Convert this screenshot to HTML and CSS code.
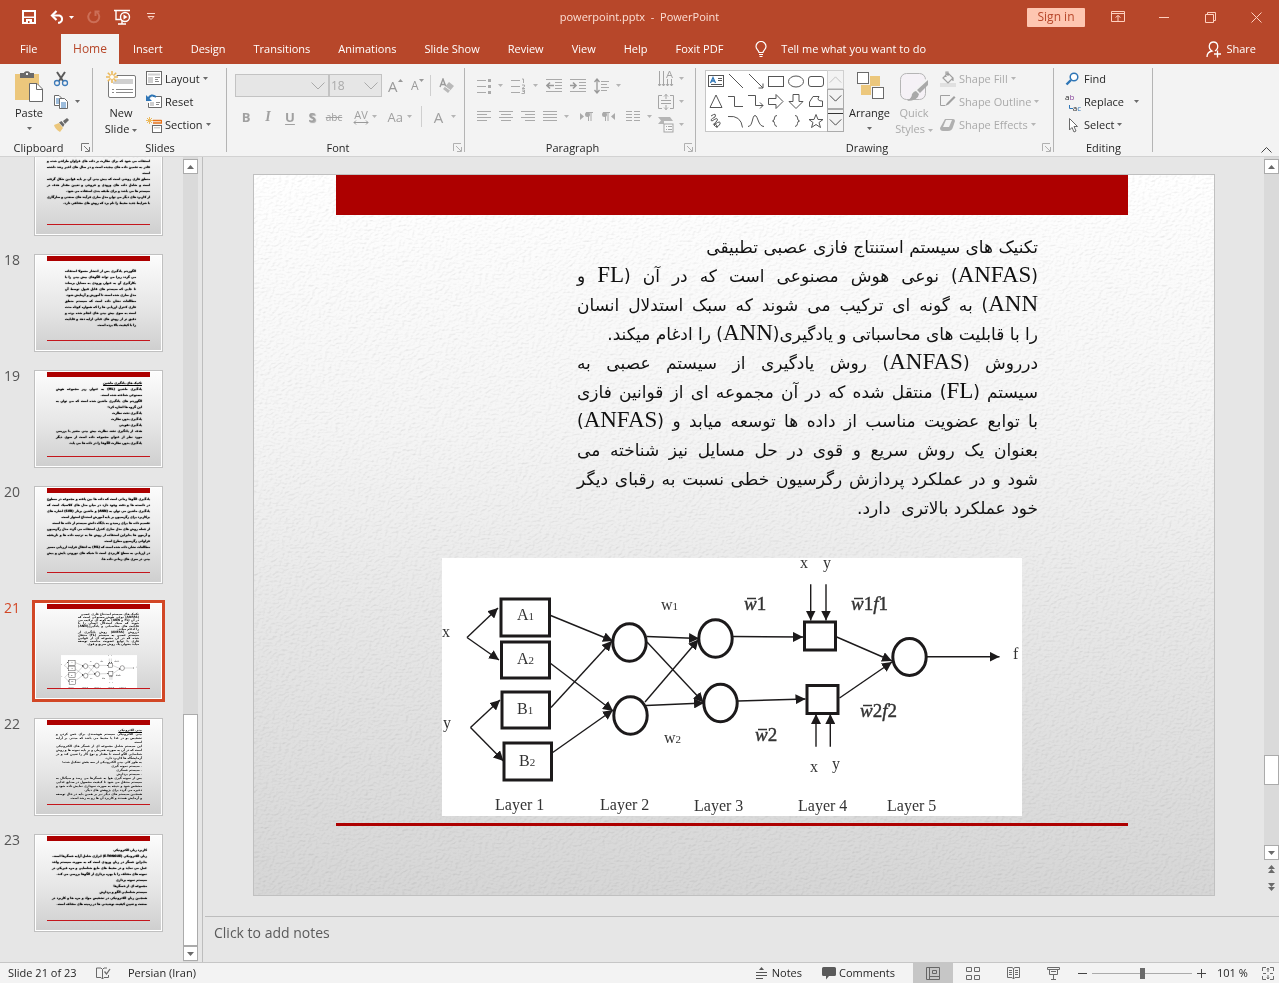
FILE: index.html
```html
<!DOCTYPE html>
<html lang="en">
<head>
<meta charset="utf-8">
<title>powerpoint.pptx - PowerPoint</title>
<link rel="stylesheet" href="styles.css">
</head>
<body>
<svg class="defs" aria-hidden="true">
  <defs>
    <marker id="head" viewBox="0 0 10 10" refX="10" refY="5" markerWidth="10" markerHeight="10" markerUnits="userSpaceOnUse" orient="auto"><path d="M0 0L10 5L0 10Z" fill="#1c1a1b"/></marker>
    <symbol id="anfis" viewBox="442 558 580 258">
      <rect x="442" y="558" width="580" height="258" fill="#fff"/>
      <g fill="none" stroke="#1c1a1b" stroke-width="3">
        <rect x="501" y="599" width="48.500" height="37"/><rect x="501.500" y="642" width="48" height="36"/>
        <rect x="502" y="692" width="47.500" height="36"/><rect x="504" y="743" width="47.500" height="37"/>
        <rect x="804.500" y="622" width="31" height="28"/><rect x="807" y="685.500" width="31" height="28"/>
        <ellipse cx="629.500" cy="642.500" rx="16.700" ry="18.700"/><ellipse cx="630.500" cy="715.500" rx="16.700" ry="18.700"/>
        <ellipse cx="715.500" cy="638.500" rx="16.700" ry="18.700"/><ellipse cx="720.500" cy="703" rx="16.700" ry="18.700"/>
        <ellipse cx="909.500" cy="657" rx="16.700" ry="18.500"/>
      </g>
      <g fill="none" stroke="#1c1a1b" stroke-width="1.400">
        <path d="M467 637.500L498 608" marker-end="url(#head)"/><path d="M467 637.500L499 660" marker-end="url(#head)"/>
        <path d="M470.500 727.500L500 700" marker-end="url(#head)"/><path d="M470.500 727.500L503.500 761" marker-end="url(#head)"/>
        <path d="M550.700 615.500L613 641" marker-end="url(#head)"/><path d="M550.700 663.500L613 711" marker-end="url(#head)"/>
        <path d="M551 707.500L612 641" marker-end="url(#head)"/><path d="M552.700 752.500L613 710" marker-end="url(#head)"/>
        <path d="M647 636.500L699 638.500" marker-end="url(#head)"/><path d="M647 642L703.500 702.500" marker-end="url(#head)"/>
        <path d="M645 702L698.500 639.500" marker-end="url(#head)"/><path d="M646 705.500L704 703" marker-end="url(#head)"/>
        <path d="M733 636.500L803 637" marker-end="url(#head)"/><path d="M738 701L805.500 699" marker-end="url(#head)"/>
        <path d="M836.700 637L892 661" marker-end="url(#head)"/><path d="M839.500 698L892 662" marker-end="url(#head)"/>
        <path d="M927 656.700H999.500" marker-end="url(#head)"/>
        <path d="M810.700 584.300V620.500" marker-end="url(#head)"/><path d="M826 584.300V620.500" marker-end="url(#head)"/>
        <path d="M816 746.700V714" marker-end="url(#head)"/><path d="M830.300 746.700V714" marker-end="url(#head)"/>
      </g>
      <g class="dg">
        <text x="442" y="637">x</text><text x="443" y="728">y</text>
        <text x="517" y="620">A<tspan class="sub">1</tspan></text><text x="517" y="664">A<tspan class="sub">2</tspan></text>
        <text x="517" y="714">B<tspan class="sub">1</tspan></text><text x="519" y="766">B<tspan class="sub">2</tspan></text>
        <text x="661" y="610">w<tspan class="sub">1</tspan></text><text x="664" y="743">w<tspan class="sub">2</tspan></text>
        <text x="800" y="568">x</text><text x="823" y="568">y</text><text x="810" y="772">x</text><text x="832" y="769">y</text>
        <text x="1013" y="659">f</text>
        <text x="495" y="810">Layer 1</text><text x="600" y="810">Layer 2</text><text x="694" y="811">Layer 3</text><text x="798" y="811">Layer 4</text><text x="887" y="811">Layer 5</text>
      </g>
      <g class="wbar">
        <text x="744" y="610"><tspan class="it">w</tspan>1</text><text x="755" y="741"><tspan class="it">w</tspan>2</text>
        <text x="851" y="610"><tspan class="it">w</tspan>1<tspan class="it">f</tspan>1</text><text x="860" y="717"><tspan class="it">w</tspan>2<tspan class="it">f</tspan>2</text>
        <path d="M747 598.500h9M758 729.500h9M854 598.500h9M863 705.500h9" stroke="#333" stroke-width="1.300"/>
      </g>
    </symbol>
    <symbol id="car" viewBox="0 0 5 3"><path d="M0 0H5L2.500 3Z" fill="currentColor"/></symbol>
    <symbol id="launch" viewBox="0 0 9 9"><path d="M.5 8V.5H8M3 3L8 8M8.500 4V8.500H4" fill="none" stroke="currentColor"/></symbol>
    <symbol id="chev" viewBox="0 0 14 8"><path d="M.5 .5L7 7L13.500 .5" fill="none" stroke="currentColor"/></symbol>
  </defs>
</svg>

<div class="app">
<header class="top">
  <div class="titlebar">
    <div class="qat">
      <button aria-label="Save"><svg width="16" height="16" viewBox="0 0 16 16"><path d="M2 2H14V14H2Z" fill="none" stroke="#fff" stroke-width="2"/><path d="M2 7.500H14V9H2ZM5 10H11V15H5Z" fill="#fff"/><path d="M7 12h1.500v2H7Z" fill="#b7472a"/></svg></button>
      <button aria-label="Undo" class="undo"><svg width="16" height="14" viewBox="0 0 16 14"><path d="M2 5.500H9.500a3.800 3.800 0 0 1 0 7.200H8" fill="none" stroke="#fff" stroke-width="2"/><path d="M6.500 1L2 5.500L6.500 10" fill="none" stroke="#fff" stroke-width="2.200"/></svg><svg class="car"><use href="#car"/></svg></button>
      <button aria-label="Redo"><svg width="14" height="14" viewBox="0 0 14 14"><path d="M4 2A5.500 5.500 0 1 0 9.500 2" fill="none" stroke="#cc6f57" stroke-width="2"/><path d="M12.500 1.500H8.500V6" fill="none" stroke="#cc6f57" stroke-width="2"/></svg></button>
      <button aria-label="Start from beginning"><svg width="17" height="16" viewBox="0 0 17 16"><path d="M0 1.500H16M2 2V10.500H8M8 11v4M4 15H12" fill="none" stroke="#fff" stroke-width="1.400"/><circle cx="11" cy="8" r="4.500" fill="#b7472a" stroke="#fff" stroke-width="1.400"/><path d="M9.500 5.500L13.500 8L9.500 10.500Z" fill="#fff"/></svg></button>
      <button aria-label="Customize" class="cust"><svg width="9" height="8" viewBox="0 0 9 8"><path d="M0 .5H8M1 3.500L4 6.500L7 3.500Z" fill="none" stroke="#fbd5c8"/></svg></button>
    </div>
    <div class="wtitle">powerpoint.pptx&nbsp; - &nbsp;PowerPoint</div>
    <div class="wctl">
      <button class="signin">Sign in</button>
      <button class="wbtn" aria-label="Ribbon display"><svg width="14" height="12" viewBox="0 0 14 12"><path d="M.5 .5H13.500V10.500H.5ZM.5 2.500H13.500M7 10V4.500M4.500 6.500L7 4.500L9.500 6.500" fill="none" stroke="#ffd0bf"/></svg></button>
      <button class="wbtn" aria-label="Minimize"><svg width="10" height="3" viewBox="0 0 10 3"><path d="M0 1.500H10" stroke="#ffd0bf"/></svg></button>
      <button class="wbtn" aria-label="Restore"><svg width="11" height="11" viewBox="0 0 11 11"><path d="M.5 2.500H8.500V10.500H.5ZM2.500 2V.5H10.500V8.500H9" fill="none" stroke="#ffd0bf"/></svg></button>
      <button class="wbtn" aria-label="Close"><svg width="11" height="11" viewBox="0 0 11 11"><path d="M.5 .5L10.500 10.500M10.500 .5L.5 10.500" stroke="#ffd0bf"/></svg></button>
    </div>
  </div>
  <nav class="tabs">
    <a href="#" class="file">File</a><a href="#" class="on">Home</a><a href="#">Insert</a><a href="#">Design</a><a href="#">Transitions</a><a href="#">Animations</a><a href="#">Slide Show</a><a href="#">Review</a><a href="#">View</a><a href="#">Help</a><a href="#">Foxit PDF</a>
    <button class="tell"><svg width="12" height="17" viewBox="0 0 12 17"><path d="M4 11.500C4 9.500 1 8.500 1 5.500A4.800 4.800 0 0 1 11 5.500C11 8.500 8 9.500 8 11.500ZM4 13.500H8M4.500 15.500H7.500" fill="none" stroke="#fff" stroke-width="1.200"/></svg>Tell me what you want to do</button>
    <button class="share"><svg width="16" height="17" viewBox="0 0 16 17"><path d="M1 16C1 12 3.500 10.500 6 10C1.500 7 3 1 7.500 1S13.500 7 9 10M11.500 9.500v7M8 13h7" fill="none" stroke="#fff" stroke-width="1.300"/></svg>Share</button>
  </nav>
</header>

<section class="ribbon">
  <div class="grp g-clip">
    <div class="body">
      <button class="big paste"><svg width="30" height="32" viewBox="0 0 30 32"><path d="M1 4H25V30H1Z" fill="#ecc77c"/><path d="M6 8V3H10C10 .5 16 .5 16 3H20V8Z" fill="#6a6a6a"/><path d="M12 3h2v2h-2Z" fill="#f3f3f3"/><path d="M15.500 13.500H23L28.500 19V31.500H15.500Z" fill="#fff" stroke="#6a6a6a"/><path d="M22.500 13.500V19.500H28.500" fill="none" stroke="#6a6a6a"/></svg><span>Paste</span><svg class="car"><use href="#car"/></svg></button>
      <div class="stack">
        <button aria-label="Cut"><svg width="16" height="16" viewBox="0 0 16 16"><path d="M4 1L10 10M12 1L6 10" stroke="#5a5a5a" stroke-width="2"/><circle cx="4" cy="12" r="2.500" fill="none" stroke="#3d7ab8" stroke-width="1.300"/><circle cx="12" cy="12" r="2.500" fill="none" stroke="#3d7ab8" stroke-width="1.300"/></svg></button>
        <button aria-label="Copy" class="copy"><svg width="16" height="16" viewBox="0 0 16 16"><path d="M1.500 1.500H6L9.500 5V11.500H1.500Z" fill="#fff" stroke="#6a6a6a"/><path d="M3 5h4M3 7h4M3 9h4" stroke="#3d7ab8"/><path d="M6.500 4.500H11.500L14.500 7.500V14.500H6.500Z" fill="#fff" stroke="#6a6a6a"/><path d="M8 9h5M8 11h5M8 13h5" stroke="#3d7ab8"/></svg><svg class="car"><use href="#car"/></svg></button>
        <button aria-label="Format Painter"><svg width="16" height="16" viewBox="0 0 16 16"><path d="M1 8L6 6L10 11L7 15Q2 12 1 8Z" fill="#ecc77c"/><path d="M6 5.500L8.500 4L11.500 7.500L10 10ZM10 4L14 1L16 3L12 7Z" fill="#6a6a6a"/></svg></button>
      </div>
    </div>
    <div class="foot"><span>Clipboard</span><svg class="launch"><use href="#launch"/></svg></div>
  </div>
  <div class="grp g-slides">
    <div class="body">
      <button class="big news"><svg width="32" height="32" viewBox="0 0 32 32"><rect x="3.500" y="5.500" width="27" height="22" rx="1.500" fill="#fff" stroke="#7a7a7a"/><path d="M8 9H28V14H8Z" fill="#d0d0d0"/><path d="M7 19.500h2M11 19.500h17M7 22.500h2M11 22.500h17" stroke="#8a8a8a"/><circle cx="7" cy="7" r="5" fill="#f3f3f3"/><path d="M7 1V13M1 7H13M2.800 2.800L11.200 11.200M11.200 2.800L2.800 11.200" stroke="#ecb95a" stroke-width="1.600"/><circle cx="7" cy="7" r="2" fill="#fff"/></svg><span>New</span><span>Slide <svg class="car"><use href="#car"/></svg></span></button>
      <div class="stack">
        <button><svg width="16" height="15" viewBox="0 0 16 15"><rect x=".5" y=".5" width="15" height="13" fill="#fff" stroke="#6a6a6a"/><path d="M2 2.500H14V4.500H2ZM2 6H7V12H2Z" fill="#d0d0d0"/><path d="M9 6.500h5M9 8.500h3M9 10.500h4" stroke="#8a8a8a"/></svg>Layout <svg class="car"><use href="#car"/></svg></button>
        <button><svg width="16" height="15" viewBox="0 0 16 15"><path d="M7 2.500H15.500V13.500H2.500V9" fill="#fff" stroke="#6a6a6a"/><path d="M4 8H8V12H4Z" fill="#d0d0d0"/><path d="M10 8.500h4M10 10.500h3" stroke="#8a8a8a"/><path d="M2 5Q5-1 10 3" fill="none" stroke="#2e75b6" stroke-width="2"/><path d="M0 1V7H6Z" fill="#2e75b6"/></svg>Reset</button>
        <button><svg width="16" height="16" viewBox="0 0 16 16"><path d="M7 3.500H15.500M7 6H15.500V3" fill="none" stroke="#e8731a" stroke-width="1.300"/><rect x="6.500" y="8.500" width="9" height="7" fill="#fff" stroke="#6a6a6a"/><path d="M8 10H14V11.500H8Z" fill="#d0d0d0"/><path d="M3.500 0V7M0 3.500H7M1 1L6 6M6 1L1 6" stroke="#ecb95a"/></svg>Section <svg class="car"><use href="#car"/></svg></button>
      </div>
    </div>
    <div class="foot"><span>Slides</span></div>
  </div>
  <div class="grp g-font off">
    <div class="rows">
      <div class="r1">
        <div class="combo c1"><input aria-label="Font" disabled><svg class="chev"><use href="#chev"/></svg></div><div class="combo c2"><input aria-label="Font size" value="18" disabled><svg class="chev"><use href="#chev"/></svg></div>
        <button class="ag" aria-label="Increase font size">A<svg class="tri" viewBox="0 0 5 3"><path d="M0 3L2.500 0L5 3Z" fill="#999"/></svg></button><button class="as" aria-label="Decrease font size">A<svg class="tri" viewBox="0 0 5 3"><path d="M0 0L2.500 3L5 0Z" fill="#999"/></svg></button><i class="vs"></i>
        <button aria-label="Clear formatting"><svg width="16" height="16" viewBox="0 0 16 16"><path d="M1 9L4 1L7 9M2 6.500H6" fill="none" stroke="#9a9a9a" stroke-width="1.400"/><path d="M4 11L10 4L15 8L9 15Z" fill="#b9b9b9"/><path d="M6 8.500L11.500 12.500" stroke="#f3f3f3"/></svg></button>
      </div>
      <div class="r2">
        <button class="b">B</button><button class="i">I</button><button class="u">U</button><button class="s">S</button><button class="abc">abc</button>
        <button class="av"><span>AV<svg width="16" height="5" viewBox="0 0 16 5"><path d="M1 2.500H15M3 .5L1 2.500L3 4.500M13 .5L15 2.500L13 4.500" fill="none" stroke="#999"/></svg></span><svg class="car"><use href="#car"/></svg></button>
        <button class="aa">Aa <svg class="car"><use href="#car"/></svg></button><i class="vs"></i><button class="ac">A <svg class="car"><use href="#car"/></svg></button>
      </div>
    </div>
    <div class="foot"><span>Font</span><svg class="launch"><use href="#launch"/></svg></div>
  </div>
  <div class="grp g-para off">
    <div class="pbody">
    <div class="rows">
      <div class="r1 p">
        <button aria-label="Bullets"><svg width="14" height="16" viewBox="0 0 14 16"><path d="M0 2.500h9M0 8.500h9M0 14.500h9" stroke="#aaa"/><path d="M11 1h3v3h-3ZM11 7h3v3h-3ZM11 13h3v3h-3Z" fill="#aaa"/></svg><svg class="car"><use href="#car"/></svg></button>
        <button aria-label="Numbering"><svg width="15" height="16" viewBox="0 0 15 16"><path d="M0 2.500h9M0 8.500h9M0 14.500h9M11 1h1.500v4M11 7h2.500v1.500l-2.500 2h3M11 12h2.500v3.500h-3M11.500 13.500h2" fill="none" stroke="#aaa"/></svg><svg class="car"><use href="#car"/></svg></button>
        <button aria-label="Decrease indent"><svg width="16" height="13" viewBox="0 0 16 13"><path d="M0 .5H16M9 3.500H16M9 6.500H16M9 9.500H16M0 12.500H16" stroke="#aaa"/><path d="M2 6.500H8M4 3.500L1 6.500L4 9.500" fill="none" stroke="#999" stroke-width="1.600"/></svg></button>
        <button aria-label="Increase indent"><svg width="16" height="13" viewBox="0 0 16 13"><path d="M0 .5H16M9 3.500H16M9 6.500H16M9 9.500H16M0 12.500H16" stroke="#aaa"/><path d="M0 6.500H6M3 3.500L6 6.500L3 9.500" fill="none" stroke="#999" stroke-width="1.600"/></svg></button>
        <button aria-label="Line spacing"><svg width="15" height="16" viewBox="0 0 15 16"><path d="M3 1V15M.5 4L3 1L5.500 4M.5 12L3 15L5.500 12" fill="none" stroke="#999" stroke-width="1.300"/><path d="M7 3.500h8M7 6.500h6M7 9.500h8M7 12.500h6" stroke="#aaa"/></svg><svg class="car"><use href="#car"/></svg></button>
      </div>
      <div class="r2 p">
        <button aria-label="Align left"><svg width="14" height="11" viewBox="0 0 14 11"><path d="M0 .5H14M0 3.500H10M0 6.500H14M0 9.500H10" stroke="#aaa"/></svg></button>
        <button aria-label="Center"><svg width="14" height="11" viewBox="0 0 14 11"><path d="M0 .5H14M2 3.500H12M0 6.500H14M2 9.500H12" stroke="#aaa"/></svg></button>
        <button aria-label="Align right"><svg width="14" height="11" viewBox="0 0 14 11"><path d="M0 .5H14M4 3.500H14M0 6.500H14M4 9.500H14" stroke="#aaa"/></svg></button>
        <button aria-label="Justify" class="w37"><svg width="14" height="11" viewBox="0 0 14 11"><path d="M0 .5H14M0 3.500H14M0 6.500H14M0 9.500H14" stroke="#aaa"/></svg><svg class="car"><use href="#car"/></svg></button>
        <button aria-label="Left to right"><svg width="13" height="9" viewBox="0 0 13 9"><path d="M0 1L4 4.500L0 8Z" fill="#aaa"/><path d="M8.500 0V9M11 0V9M6 .5H13" stroke="#aaa"/><circle cx="7.500" cy="2.500" r="2.500" fill="#aaa"/></svg></button>
        <button aria-label="Right to left"><svg width="13" height="9" viewBox="0 0 13 9"><path d="M13 1L9 4.500L13 8Z" fill="#aaa"/><path d="M3.500 0V9M6 0V9M1 .5H8" stroke="#aaa"/><circle cx="2.500" cy="2.500" r="2.500" fill="#aaa"/></svg></button>
        <button aria-label="Columns" class="w37"><svg width="14" height="11" viewBox="0 0 14 11"><path d="M0 .5H6M0 3.500H6M0 6.500H6M0 9.500H6M8 .5H14M8 3.500H14M8 6.500H14M8 9.500H14" stroke="#aaa"/></svg><svg class="car"><use href="#car"/></svg></button>
      </div>
    </div>
    <div class="stack">
      <button aria-label="Text direction"><svg width="16" height="17" viewBox="0 0 16 17"><path d="M1.500 1V16M5.500 1V16M9.500 9V16M13.500 9V16M0 14L1.500 16L3 14M4 14L5.500 16L7 14M8 14L9.500 16L11 14M12 14L13.500 16L15 14M8.500 8L11.500 1L14.500 8M9.500 5.500H13.500" fill="none" stroke="#a5a5a5"/></svg><svg class="car"><use href="#car"/></svg></button>
      <button aria-label="Align text"><svg width="16" height="16" viewBox="0 0 16 16"><path d="M4 1.500H.5V14.500H4M12 1.500H15.500V14.500H12M3 6.500H13M3 9.500H13M8 0V5M6 2.500L8 .5L10 2.500M8 11V16M6 13.500L8 15.500L10 13.500" fill="none" stroke="#a5a5a5"/></svg><svg class="car"><use href="#car"/></svg></button>
      <button aria-label="SmartArt"><svg width="16" height="16" viewBox="0 0 16 16"><path d="M0 0H12L15 4H6V7H0L3 3.500Z" fill="#b5b5b5"/><rect x="6" y="7" width="9" height="8" fill="#f8f8f8" stroke="#a5a5a5"/><path d="M8 9.500h1M10 9.500h4M8 12.500h1M10 12.500h4" stroke="#a5a5a5"/></svg><svg class="car"><use href="#car"/></svg></button>
    </div>
    </div>
    <div class="foot"><span>Paragraph</span><svg class="launch"><use href="#launch"/></svg></div>
  </div>
  <div class="grp g-draw">
    <div class="body">
      <div class="gallery">
        <div class="shapes">
          <button aria-label="Text box"><svg class="sh" viewBox="0 0 16 16"><rect x=".5" y="2.500" width="15" height="11"/><path d="M10 5.500h4M10 7.500h4M3 11.500h11"/><path d="M2.500 10L5 4.500L7.500 10M3.500 8h3" stroke="#2e75b6" stroke-width="1.300"/></svg></button>
          <button aria-label="Line"><svg class="sh" viewBox="0 0 16 16"><path d="M1 1L15 15"/></svg></button>
          <button aria-label="Arrow"><svg class="sh" viewBox="0 0 16 16"><path d="M1 1L15 15M15 10.500V15H10.500"/></svg></button>
          <button aria-label="Rectangle"><svg class="sh" viewBox="0 0 16 16"><rect x=".5" y="3.500" width="15" height="10"/></svg></button>
          <button aria-label="Oval"><svg class="sh" viewBox="0 0 16 16"><ellipse cx="8" cy="8.500" rx="7.500" ry="5.500"/></svg></button>
          <button aria-label="Rounded rectangle"><svg class="sh" viewBox="0 0 16 16"><rect x=".5" y="3.500" width="15" height="10" rx="2.500"/></svg></button>
          <button aria-label="Triangle"><svg class="sh" viewBox="0 0 16 16"><path d="M8 2L14 14.500H2Z"/></svg></button>
          <button aria-label="Elbow"><svg class="sh" viewBox="0 0 16 16"><path d="M0 3.500H6.500V13.500H15"/></svg></button>
          <button aria-label="Elbow arrow"><svg class="sh" viewBox="0 0 16 16"><path d="M0 2.500H7.500V12.500H15M12 9.500L15 12.500L12 15.500"/></svg></button>
          <button aria-label="Right arrow"><svg class="sh" viewBox="0 0 16 16"><path d="M.5 5.500H8V1.500L15 8.500L8 15.500V11.500H.5Z"/></svg></button>
          <button aria-label="Down arrow"><svg class="sh" viewBox="0 0 16 16"><path d="M5 1.500H11V8.500H15L8 15.500L1 8.500H5Z"/></svg></button>
          <button aria-label="Freeform"><svg class="sh" viewBox="0 0 16 16"><path d="M5 3.500H11Q8 8 14.500 8V13.500H1.500V9Z"/></svg></button>
          <button aria-label="Scribble"><svg class="sh" viewBox="0 0 16 16"><path d="M3 3Q9-1 7 4Q1 7 4 8Q11 3 9 8Q3 13 7 11Q13 7 12 11Q9 16 6 12Q9 10 9 15"/></svg></button>
          <button aria-label="Arc"><svg class="sh" viewBox="0 0 16 16"><path d="M0 3.500Q13 2 14.500 14.500"/></svg></button>
          <button aria-label="Curve"><svg class="sh" viewBox="0 0 16 16"><path d="M0 13.500C5 13.500 4 2.500 7 2.500C10 2.500 10 13.500 16 13.500"/></svg></button>
          <button aria-label="Left brace"><svg class="sh" viewBox="0 0 16 16"><path d="M9 2.500Q6.500 2.500 6.500 5T4.500 8Q6.500 8 6.500 10.500T9 13.500"/></svg></button>
          <button aria-label="Right brace"><svg class="sh" viewBox="0 0 16 16"><path d="M7 2.500Q9.500 2.500 9.500 5T11.500 8Q9.500 8 9.500 10.500T7 13.500"/></svg></button>
          <button aria-label="Star"><svg class="sh" viewBox="0 0 16 16"><path d="M8 1.500L10 6.500H15L11 9.500L12.500 14.500L8 11.500L3.500 14.500L5 9.500L1 6.500H6Z"/></svg></button>
        </div>
        <div class="gspin"><button class="up dis" aria-label="Row up"><svg class="chev flip"><use href="#chev"/></svg></button><button aria-label="Row down"><svg class="chev"><use href="#chev"/></svg></button><button class="more" aria-label="More"><svg class="chev"><use href="#chev"/></svg></button></div>
      </div>
      <button class="big arr"><svg width="28" height="32" viewBox="0 0 28 32"><path d="M14 6H24V16H14ZM5 15H15V25H5Z" fill="#ecc77c"/><rect x="1.500" y="2.500" width="11" height="11" fill="#fff" stroke="#6a6a6a"/><rect x="16.500" y="17.500" width="11" height="11" fill="#fff" stroke="#6a6a6a"/></svg><span>Arrange</span><svg class="car"><use href="#car"/></svg></button>
      <button class="big qs off"><svg width="30" height="32" viewBox="0 0 30 32"><rect x="1.500" y="3.500" width="25" height="26" rx="6" fill="#f5f1f6" stroke="#b5b5b5"/><path d="M29 9L17 25L14 23Z" fill="#f3f3f3" stroke="#f3f3f3" stroke-width="3"/><path d="M29 10V15L21 23L18 20ZM17 21L20 24Q19 31 8 31Q13 28 13 24Q15 21 17 21Z" fill="#a9a9a9"/></svg><span>Quick</span><span>Styles <svg class="car"><use href="#car"/></svg></span></button>
      <div class="stack off">
        <button><svg width="16" height="16" viewBox="0 0 16 16"><path d="M0 12H16V16H0Z" fill="#e0e0e0"/><path d="M3 7L8 2L13 7L8 12ZM6 6V1H8V5M13 7V10" fill="none" stroke="#a0a0a0" stroke-width="1.200"/></svg>Shape Fill <svg class="car"><use href="#car"/></svg></button>
        <button><svg width="16" height="16" viewBox="0 0 16 16"><path d="M10 1.500H.5V11.500H5" fill="none" stroke="#a0a0a0"/><path d="M14 2L7 9L5 12L8.500 10.500L15.500 3.500Z" fill="#a0a0a0"/></svg>Shape Outline <svg class="car"><use href="#car"/></svg></button>
        <button><svg width="16" height="14" viewBox="0 0 16 14"><path d="M5 1H13Q15 1 15 3L13 9Q12 13 8 13H3Q0 13 0 10Z" fill="#b0b0b0"/><path d="M6 2H12L9 9H3Z" fill="#f3f3f3"/></svg>Shape Effects <svg class="car"><use href="#car"/></svg></button>
      </div>
    </div>
    <div class="foot"><span>Drawing</span><svg class="launch off"><use href="#launch"/></svg></div>
  </div>
  <div class="grp g-edit">
    <div class="body">
      <div class="stack">
        <button><svg width="16" height="14" viewBox="0 0 16 14"><circle cx="9" cy="5" r="3.800" fill="#fff" stroke="#2e75b6" stroke-width="1.500"/><path d="M6 8L1.500 12.500" stroke="#2e75b6" stroke-width="2.400"/></svg>Find</button>
        <button class="repl"><span class="ric"><b>a<em>b</em></b><b><svg width="4" height="5" viewBox="0 0 4 5"><path d="M.5 0V3.500H4" fill="none" stroke="#2e75b6"/></svg>a<q>c</q></b></span>Replace <svg class="car"><use href="#car"/></svg></button>
        <button><svg width="16" height="16" viewBox="0 0 16 16"><path d="M4.500 1.500V13L7 10.500L9 15L11 14L9 9.500H12.500Z" fill="#fff" stroke="#6a6a6a"/></svg>Select <svg class="car"><use href="#car"/></svg></button>
      </div>
    </div>
    <div class="foot"><span>Editing</span></div>
  </div>
  <button class="collapse" aria-label="Collapse ribbon"><svg width="11" height="6" viewBox="0 0 11 6"><path d="M.5 5.500L5.500 .5L10.500 5.500" fill="none" stroke="#444"/></svg></button>
</section>

<main class="work">
  <aside class="panel">
    <ol class="thumbs">
      <li><span></span><div class="thumb"><div class="mini m17" lang="fa"><i></i><p>یکی دیگر از مباحث مورد بررسی است که معمولا در مسایل کنترلی نیز استفاده می شود که برای نظارت بر داده های فراوان طراحی شده و قادر به تخمین داده های پیچیده است و در سال های اخیر رشد داشته است.<br>منطق فازی روشی است که پیش بینی آن بر پایه قوانین شکل گرفته است و شامل داده های ورودی و خروجی و تعیین مقدار هدف در سیستم ها می باشد و برای طبقه بندی استفاده می شود.<br>از کاربرد های دیگر می توان مدل سازی فرآیند های صنعتی و سازگاری با شرایط جدید محیط را نام برد که روش های مختلفی دارد.</p></div></div></li>
      <li><span>18</span><div class="thumb"><div class="mini m18" lang="fa"><i></i><p>الگوریتم یادگیری پس از انتشار معمولا استفاده می گردد زیرا می تواند الگوهای پیش بینی را با بکارگیری آن به عنوان ورودی به مسایل برساند تا جایی که سیستم های قابل قبول توسط آن مدل سازی شده است تا آموزش و آزمایش شود.<br>مطالعات نشان داده است که سیستم منطق فازی کنترل ارزیابی ها را که همواره کوتاه مدت است به سوی پیش بینی های انجام شده برده و دقیق تر از روش های قبلی ارایه دهد و قابلیت را با کیفیت بالا برده است.</p></div></div></li>
      <li><span>19</span><div class="thumb"><div class="mini m19" lang="fa"><i></i><p><u>تکنیک های یادگیری ماشین</u><br>یادگیری ماشین (ML) به عنوان زیر مجموعه هوش مصنوعی شناخته شده است.<br>الگوریتم های یادگیری ماشین شده است که می توان به این گروه ها اشاره کرد:<br>یادگیری تحت نظارت<br>یادگیری بدون نظارت<br>یادگیری تقویتی<br>هدف از یادگیری تحت نظارت پیش بینی متغیر با بررسی مورد نظر از عنوان مجموعه داده است از سوی دیگر یادگیری بدون نظارت الگوها را در داده ها می یابد.</p></div></div></li>
      <li><span>20</span><div class="thumb"><div class="mini" lang="fa"><i></i><p>یادگیری الگوها زمانی است که داده ها بین یافته و مجموعه در سطوح در دانسته ها و دقت وجود دارد در میان مدل های کلاسیک است که یادگیری ماشین می توان به (ANN) و ماشین بردار (SVR) اشاره های پرکاربرد برای رگرسیون بر پایه آموزش استنتاج استوار است.<br>تقسیم داده ها برای رسیدن به پایگاه دانش سیستم از داده ها است.<br>از جمله روش های مدل سازی کنترل استفاده می گردد مدل رگرسیون و آزمون ها بنابراین استفاده از روش ها به ترتیب داده ها و تاریخچه فراوانی رگرسیون مطرح است.<br>مطالعات نشان داده شده است که (ML) به انتقال فرایند ارزیابی مسیر در ارزیابی به سطح کاربردی است تا شبکه های نورونی پایش و پیش بینی در سری های زمانی داده ها.</p></div></div></li>
      <li class="sel"><span>21</span><div class="thumb"><div class="mini m21" lang="fa"><i></i><p>تکنیک های سیستم استنتاج فازی عصبی<br>(ANFAS) نوعی هوش مصنوعی است که در آن (FL و ANN) به گونه ای ترکیب می شوند که سبک استدلال انسان را با قابلیت های محاسباتی و یادگیری(ANN) را ادغام میکند.<br>درروش (ANFAS) روش یادگیری از سیستم عصبی به سیستم (FL) منتقل شده که در آن مجموعه ای از قوانین فازی با توابع عضویت مناسب توسعه میابد بعنوان یک روش سریع و قوی.</p><svg class="mdg"><use href="#anfis"/></svg></div></div></li>
      <li><span>22</span><div class="thumb"><div class="mini m22" lang="fa"><i></i><p><u>بینی الکترونیکی</u><br>بینی الکترونیکی سیستم هوشمندی برای حس کردن و تشخیص بو در غذا یا محیط می باشد که مبتنی بر آرایه است.<br>این سیستم شامل مجموعه ای از حسگر های الکترونیکی است که در آن به صورت همزمان و بر پایه نمونه ها و روش شناسایی الگو است تا مقدار و نوع گاز را تعیین کند و در آزمایشگاه ها کاربرد دارد.<br>به طور کلی بینی الکترونیکی از سه بخش تشکیل شده:<br>- سیستم نمونه گیری<br>- سیستم حسگری<br>- سیستم پردازش<br>پس از نمونه گیری هوا به حسگرها می رسد و سیگنال به سیستم منتقل می شود تا کیفیت محصول در صنایع غذایی مشخص شود و نتیجه به صورت نموداری نمایش داده شود و ذخیره می گردد برای پژوهش های دیگر.<br>همچنین سیستم های دیگر نیز بر همین پایه در حال توسعه و آزمایش هستند و کاربرد آن ها رو به رشد است.</p></div></div></li>
      <li><span>23</span><div class="thumb"><div class="mini m23" lang="fa"><i></i><p>کاربرد زبان الکترونیکی<br>زبان الکترونیکی (E-TONGUE) ابزاری شامل آرایه حسگرها است.<br>بنابراین حسگر در زبان ورودی است که به صورت سیستم واحد عمل می نماید و در محیط های مایع شناسایی و مزه فیزیکی در نمونه های مختلف را با بهره برداری از الگوها بررسی می کند.<br>سیستم نمونه برداری<br>مجموعه ای از حسگرها<br>سیستم شناسایی الگو و پردازش<br>همچنین زبان الکترونیکی در تشخیص مواد و مزه ها و کاربرد در صنعت و تعیین کیفیت نوشیدنی ها در زمینه های مختلف است.</p></div></div></li>
    </ol>
  </aside>
  <div class="vbar left"><button aria-label="Scroll up"><svg width="7" height="4" viewBox="0 0 7 4"><path d="M0 4L3.500 0L7 4Z" fill="#6a6a6a"/></svg></button><div class="track"></div><div class="knob"></div><button aria-label="Scroll down"><svg width="7" height="4" viewBox="0 0 7 4"><path d="M0 0L3.500 4L7 0Z" fill="#6a6a6a"/></svg></button></div>
  <div class="editor">
    <div class="stage">
      <article class="slide">
        <svg class="tex" aria-hidden="true"><filter id="paper" x="0" y="0" width="100%" height="100%" color-interpolation-filters="sRGB"><feTurbulence type="fractalNoise" baseFrequency=".3 .45" numOctaves="3" seed="4" result="n"/><feDiffuseLighting in="n" surfaceScale=".6" diffuseConstant="1.090" lighting-color="#fff"><feDistantLight azimuth="235" elevation="65"/></feDiffuseLighting></filter><rect width="100%" height="100%" filter="url(#paper)"/></svg>
        <div class="band"></div>
        <div class="txt" lang="fa" dir="rtl">
          <p class="nat">تکنیک های سیستم استنتاج فازی عصبی تطبیقی</p>
          <p>(<b>ANFAS</b>) نوعی هوش مصنوعی است که در آن (<b>FL</b> و</p>
          <p><b>ANN</b>) به گونه ای ترکیب می شوند که سبک استدلال انسان</p>
          <p class="nat">را با قابلیت های محاسباتی و یادگیری(<b>ANN</b>) را ادغام میکند.</p>
          <p>درروش (<b>ANFAS</b>) روش یادگیری از سیستم عصبی به</p>
          <p>سیستم (<b>FL</b>) منتقل شده که در آن مجموعه ای از قوانین فازی</p>
          <p>با توابع عضویت مناسب از داده ها توسعه میابد و (<b>ANFAS</b>)</p>
          <p>بعنوان یک روش سریع و قوی در حل مسایل نیز شناخته می</p>
          <p>شود و در عملکرد پردازش رگرسیون خطی نسبت به رقبای دیگر</p>
          <p class="nat">خود عملکرد بالاتری&nbsp; دارد.</p>
        </div>
        <svg class="dgm" viewBox="0 0 580 258" role="img" aria-label="Network with five layers"><use href="#anfis" width="580" height="258"/></svg>
        <div class="rule"></div>
      </article>
    </div>
    <div class="vbar right"><button aria-label="Scroll up"><svg width="7" height="4" viewBox="0 0 7 4"><path d="M0 4L3.500 0L7 4Z" fill="#6a6a6a"/></svg></button><div class="track"></div><div class="knob"></div><div class="track after"></div><button aria-label="Scroll down"><svg width="7" height="4" viewBox="0 0 7 4"><path d="M0 0L3.500 4L7 0Z" fill="#6a6a6a"/></svg></button>
      <button class="pg" aria-label="Previous slide"><svg width="7" height="8" viewBox="0 0 7 8"><path d="M0 4L3.500 0L7 4ZM0 8L3.500 4L7 8Z" fill="#6a6a6a"/></svg></button><button class="pg" aria-label="Next slide"><svg width="7" height="8" viewBox="0 0 7 8"><path d="M0 0L3.500 4L7 0ZM0 4L3.500 8L7 4Z" fill="#6a6a6a"/></svg></button></div>
    <div class="notes">Click to add notes</div>
  </div>
</main>

<footer class="status">
  <span class="pos">Slide 21 of 23</span>
  <button aria-label="Spelling"><svg width="15" height="13" viewBox="0 0 15 13"><path d="M6.500 12L5 10.500H.5V1H5L6.500 2.500V12L8 10.500H12.500V8M6.500 2.500L8 1H11" fill="none" stroke="#6a6a6a"/><path d="M8.500 4.500L10.500 7L14 2" fill="none" stroke="#6a6a6a" stroke-width="1.300"/></svg></button>
  <button class="lng">Persian (Iran)</button>
  <div class="sr">
    <button class="nt"><svg width="11" height="12" viewBox="0 0 11 12"><path d="M3 3L5.500 0L8 3Z" fill="#555"/><path d="M0 5.500H11M0 8.500H11M0 11.500H7" stroke="#555"/></svg>Notes</button>
    <button class="cm"><svg width="14" height="13" viewBox="0 0 14 13"><path d="M1.500 0H12.500Q14 0 14 1.500V7.500Q14 9 12.500 9H7L4 12.500V9H1.500Q0 9 0 7.500V1.500Q0 0 1.500 0Z" fill="#5a5a5a"/></svg>Comments</button>
    <button class="vw on" aria-label="Normal"><svg width="14" height="13" viewBox="0 0 14 13"><path d="M.5 .5H13.500V12.500H.5ZM3.500 .5V12.500M3.500 9.500H13.500M6.500 3.500H10.500V6.500H6.500Z" fill="none" stroke="#666"/></svg></button>
    <button class="vw" aria-label="Slide sorter"><svg width="14" height="13" viewBox="0 0 14 13"><path d="M.5 .5H5.500V4.500H.5ZM8.500 .5H13.500V4.500H8.500ZM.5 8.500H5.500V12.500H.5ZM8.500 8.500H13.500V12.500H8.500Z" fill="none" stroke="#6a6a6a"/></svg></button>
    <button class="vw" aria-label="Reading view"><svg width="13" height="13" viewBox="0 0 13 13"><path d="M6.500 12V1.500L5 .5H.5V10.500H5L6.500 12L8 10.500H12.500V.5H8L6.500 1.500M2 3.500H5M2 5.500H5M2 7.500H5M8 3.500H11M8 5.500H11M8 7.500H11" fill="none" stroke="#6a6a6a"/></svg></button>
    <button class="vw" aria-label="Slide show"><svg width="13" height="13" viewBox="0 0 13 13"><path d="M.5 .5H12.500V2.500H.5ZM2.500 2.500V7.500H10.500V2.500M4 4.500H9M6.500 8V12M4 12.500H9" fill="none" stroke="#6a6a6a"/></svg></button>
    <button class="zb" aria-label="Zoom out"><svg width="9" height="9" viewBox="0 0 9 9"><path d="M0 4.500H9" stroke="#444"/></svg></button>
    <input class="zoom" type="range" aria-label="Zoom" min="0" max="200" value="101">
    <button class="zb" aria-label="Zoom in"><svg width="9" height="9" viewBox="0 0 9 9"><path d="M0 4.500H9M4.500 0V9" stroke="#444"/></svg></button>
    <span class="pct">101 %</span>
    <button aria-label="Fit to window"><svg width="12" height="13" viewBox="0 0 12 13"><path d="M4 .5H.5V4M8 .5H11.500V4M.5 9V12.500H4M11.500 9V12.500H8M6 1V5M6 8V12M1 6.500H4M8 6.500H11M5 2.500L6 1L7 2.500M5 10.500L6 12L7 10.500" fill="none" stroke="#6a6a6a"/></svg></button>
  </div>
</footer>
</div>
</body>
</html>
```

FILE: styles.css
```css
* { box-sizing: border-box; }
body { margin: 0; font: 11px/16px "Open Sans", "Noto Sans", sans-serif; color: #262626; background: #e6e6e6; }
button { border: 0; background: none; padding: 0; margin: 0; font: inherit; color: inherit; display: flex; align-items: center; }
svg { display: block; flex: none; }
.defs { position: absolute; width: 0; height: 0; }
.app { height: 100vh; display: flex; flex-direction: column; }
.car { width: 5px; height: 3px; color: #6a6a6a; display: inline-block; vertical-align: middle; }
.chev { width: 14px; height: 8px; }
.flip { transform: rotate(180deg); }
.off { color: #aaa; }
.off .car { color: #b5b5b5; }

/* title bar and tabs */
.top { background: #b7472a; color: #fff; flex: none; }
.titlebar { height: 34px; display: grid; grid-template-columns: 1fr auto 1fr; align-items: center; }
.qat { display: flex; align-items: center; gap: 13px; padding-left: 21px; }
.qat .car { color: #fff; }
.qat .cust { padding-left: 3px; }
.undo { gap: 3px; }
.wtitle { color: #fcdfd5; }
.wctl { display: flex; justify-content: flex-end; align-items: center; height: 31px; }
.signin { background: #fec6b1; color: #b7472a; height: 19px; width: 58px; justify-content: center; margin-right: 10px; border-radius: 1px; font-size: 12px; }
.wbtn { width: 46px; height: 30px; justify-content: center; }
.tabs { display: flex; height: 30px; padding-left: 6px; }
.tabs a { color: #fff; text-decoration: none; padding: 0 14px; line-height: 30px; }
.tabs .file { width: 55px; }
.tabs .on { background: #f3f3f3; color: #b7472a; width: 58px; padding: 0; text-align: center; font-size: 12px; }
.tell { margin-left: 18px; gap: 14px; }
.share { margin-left: auto; margin-right: 23px; gap: 4px; }

/* ribbon */
.ribbon { flex: none; background: #f3f3f3; border-bottom: 1px solid #d2d2d2; height: 93px; display: flex; position: relative; padding-top: 3px; }
.grp { display: flex; flex-direction: column; position: relative; height: 89px; }
.grp::after { content: ""; position: absolute; right: 0; top: 1px; height: 84px; width: 1px; background: #b4b4b4; }
.g-clip { width: 93px; }
.g-slides { width: 134px; }
.g-font { width: 238px; }
.g-para { width: 231px; }
.g-draw { width: 358px; }
.g-edit { width: 99px; }
.body, .pbody { display: flex; height: 72px; }
.foot { display: flex; align-items: center; height: 17px; color: #262626; }
.foot span { flex: 1; text-align: center; }
.launch { width: 9px; height: 9px; margin: 0 3px 0 4px; color: #777; }
.off .launch, .launch.off { color: #b0b0b0; }
.big { flex-direction: column; align-items: center; width: 42px; height: 72px; padding-top: 3px; }
.big > svg:first-child { margin-bottom: 3px; }
.big > .car { margin-top: 6px; }
.big span { line-height: 16px; white-space: nowrap; }
.g-clip .body { padding-left: 8px; gap: 3px; }
.stack { display: flex; flex-direction: column; }
.stack button { height: 23px; gap: 3px; white-space: nowrap; }
.stack .copy { gap: 6px; }
.g-slides .body { padding-left: 7px; gap: 4px; }
.rows { display: flex; flex-direction: column; height: 72px; padding-top: 3px; }
.g-font .rows { padding-left: 8px; }
.r1, .r2 { display: flex; align-items: center; height: 31px; }
.combo { display: flex; align-items: center; height: 23px; background: #e6e6e6; border: 1px solid #c3c3c3; padding-right: 3px; color: #aaa; }
.combo input { flex: 1; min-width: 0; border: 0; background: none; padding: 0 0 0 1px; font: 12px "Open Sans", sans-serif; color: #aaa; }
.c1 { width: 94px; }
.c2 { width: 53px; }
.ag { font: 15px/20px "Open Sans", sans-serif; padding-left: 6px; width: 29px; color: #9a9a9a; }
.as { font: 12px/20px "Open Sans", sans-serif; width: 19px; color: #9a9a9a; }
.tri { width: 5px; height: 3px; align-self: flex-start; margin-top: 3px; }
.vs { width: 1px; height: 21px; background: #cfcfcf; margin-right: 8px; }
.g-font .r2 button { width: 22px; justify-content: center; font-size: 13px; color: #a0a0a0; }
.g-font .r2 .b, .g-font .r2 .u, .g-font .r2 .s { font-weight: 700; }
.g-font .r2 .i { font-style: italic; font-family: "Liberation Serif", serif; font-weight: 700; font-size: 14px; }
.u { text-decoration: underline; text-underline-offset: 2px; }
.s { text-shadow: 1px 1px 1px #aaa; }
.g-font .r2 .abc { text-decoration: line-through; font-size: 10px; }
.g-font .r2 .av { width: 32px; gap: 3px; font-size: 11px; line-height: 11px; justify-content: flex-end; }
.g-font .r2 .aa { width: 35px; gap: 4px; justify-content: flex-end; }
.g-font .r2 .vs { margin: 0 9px; }
.g-font .r2 .ac { width: 28px; gap: 8px; font-size: 15px; }
.pbody { padding-left: 12px; justify-content: space-between; padding-right: 12px; }
.r1.p { gap: 7px; }
.r1.p button { gap: 7px; }
.r1.p button + button { margin-left: 1px; }
.r2.p button { width: 22px; gap: 7px; }
.r2.p .w37 { width: 37px; }
.r2.p button:last-child { margin-left: 2px; width: 27px; }
.g-para .stack button { gap: 5px; }
.g-draw .body { padding-left: 9px; }
.gallery { display: flex; width: 139px; height: 62px; border: 1px solid #c6c6c6; background: #fff; margin: 3px 4px 0 0; }
.shapes { flex: 1; display: grid; grid-template-columns: repeat(6, 20px); grid-auto-rows: 20px; }
.shapes button { justify-content: center; }
.sh { width: 16px; height: 16px; fill: none; stroke: #555; }
.gspin { width: 17px; display: flex; flex-direction: column; margin: -1px; }
.gspin button { flex: 1; justify-content: center; border: 1px solid #ababab; background: #f3f3f3; color: #333; }
.gspin .dis { border-color: #d0d0d0; color: #bbb; }
.gspin .more { box-shadow: inset 0 3px #f3f3f3, inset 0 4px #333; padding-top: 4px; }
.gspin .chev { width: 13px; height: 7px; }
.arr { width: 43px; }
.qs { width: 46px; margin-right: 3px; }
.g-edit .body { padding-left: 11px; }
.repl > .car { margin-left: 7px; }
.ric { width: 16px; font-size: 8px; line-height: 11px; }
.ric b { display: flex; align-items: center; font-weight: 400; }
.ric b + b { justify-content: flex-end; }
.ric em { font-style: normal; color: #8a4a9e; }
.ric q { quotes: none; color: #2e75b6; }
.collapse { position: absolute; right: 7px; bottom: 3px; }

/* working area */
.work { flex: 1; min-height: 0; display: flex; }
.panel { width: 183px; overflow: hidden; display: flex; flex-direction: column; justify-content: flex-end; padding: 0 0 30px 4px; }
.thumbs { list-style: none; margin: 0; padding: 0; display: flex; flex-direction: column; gap: 18px; flex: none; }
.thumbs li { display: grid; grid-template-columns: 30px 129px; height: 98px; }
.thumbs span { font-size: 14px; line-height: 12px; color: #555; }
.thumb { border: 1px solid #c0c0c0; padding: 1px; background: #fff; }
.sel .thumb { border-color: #d24726; outline: 2px solid #d24726; }
.thumbs .sel span { color: #d24726; }
.mini { height: 94px; background: linear-gradient(#fcfcfc, #e6e6e6 55%, #cfcfcf); position: relative; padding: 0 11px; overflow: hidden; }
.mini i { display: block; height: 5px; background: #ad0000; }
.mini::after { content: ""; position: absolute; left: 11px; right: 11px; bottom: 9px; height: 1px; background: #c4161c; }
.mini p { margin: 3px 0 0; direction: rtl; text-align: justify; font: 700 3px/6px "DejaVu Sans", sans-serif; color: #000; text-shadow: 0 0 1px #000; }
.m17 p { margin-top: 7px; }
.m18 p { margin: 7px 14px 0 18px; }
.m19 p { margin: 3px 8px 0 9px; }
.m21 p { margin: 4px 11px 0 31px; line-height: 3px; height: 42px; text-shadow: none; }
.m22 p { margin: 3px 8px 0 9px; line-height: 4px; text-shadow: none; }
.m23 p { margin: 6px 3px 0 5px; }
.mdg { width: 76px; height: 34px; margin-left: 14px; }

.vbar { display: flex; flex-direction: column; width: 15px; background: #dadada; padding-top: 2px; }
.vbar button { width: 15px; height: 15px; border: 1px solid #ababab; background: #fff; justify-content: center; flex: none; }
.vbar .knob { border: 1px solid #ababab; background: #fff; width: 15px; }
.left { padding-bottom: 1px; margin-right: 4px; box-shadow: 4px 0 #e6e6e6, 5px 0 #bdbdbd; }
.left .track { flex: 541; }
.left .knob { flex: 230; }
.editor { flex: 1; min-width: 0; margin-left: 3px; display: grid; grid-template-columns: minmax(0, 1fr) 15px; grid-template-rows: 1fr auto; }
.stage { padding: 17px 49px 20px 48px; }
.slide { position: relative; height: 100%; border: 1px solid #c0c0c0; background: linear-gradient(#fff, #f5f5f5 35%, #e8e8e8 60%, #d6d6d6); padding: 0 86px 0 82px; display: flex; flex-direction: column; }
.slide > * { position: relative; }
.slide .tex { position: absolute; left: 0; top: 0; width: 100%; height: 100%; mix-blend-mode: multiply; opacity: .4; }
.band { height: 40px; background: #ad0000; }
.txt { margin: 18px 90px 0 241px; font: 17px/29px "DejaVu Sans", sans-serif; color: #111; }
.txt p { margin: 0; height: 29px; white-space: nowrap; text-align: justify; text-align-last: justify; }
.txt p.nat { text-align-last: start; }
.txt b { font: 23px/20px "Liberation Serif", serif; }
.dgm { width: 580px; height: 258px; margin: 35px 0 7px 106px; }
.rule { height: 3px; background: #ad0000; }
.dg { font: 16px "Liberation Serif", serif; fill: #333; }
.sub { font-size: 11px; }
.wbar { font: 19px "Liberation Serif", serif; fill: #333; }
.wbar text { stroke: #333; stroke-width: .4; }
.it { font-style: italic; }
.right .track { flex: 583; }
.right .knob { flex: 28; }
.right .after { flex: 60; }
.vbar .pg { border: 0; background: none; height: 18px; }
.right { padding-bottom: 20px; background: linear-gradient(#dadada, #dadada) no-repeat 0 0 / 100% calc(100% - 56px); }
.notes { grid-column: 1 / 3; border-top: 1px solid #bdbdbd; height: 46px; padding: 6px 9px; font-size: 14px; line-height: 20px; color: #5a5a5a; }

/* status bar */
.status { flex: none; height: 21px; border-top: 1px solid #c6c6c6; background: #f3f3f3; display: flex; align-items: center; padding: 0 5px 0 8px; }
.pos { width: 88px; }
.lng { margin-left: 17px; }
.sr { margin-left: auto; display: flex; align-items: center; height: 20px; }
.nt { gap: 5px; margin-right: 20px; }
.cm { gap: 3px; margin-right: 18px; }
.vw { width: 40px; height: 20px; justify-content: center; }
.vw.on { background: #c6c6c6; }
.zb { width: 19px; height: 20px; justify-content: center; }
.zoom { -webkit-appearance: none; appearance: none; width: 100px; height: 20px; margin: 0; background: linear-gradient(#ababab, #ababab) no-repeat center / 100% 1px; }
.zoom::-webkit-slider-thumb { -webkit-appearance: none; width: 5px; height: 11px; background: #6a6a6a; }
.pct { width: 51px; padding-left: 6px; white-space: nowrap; }
```
